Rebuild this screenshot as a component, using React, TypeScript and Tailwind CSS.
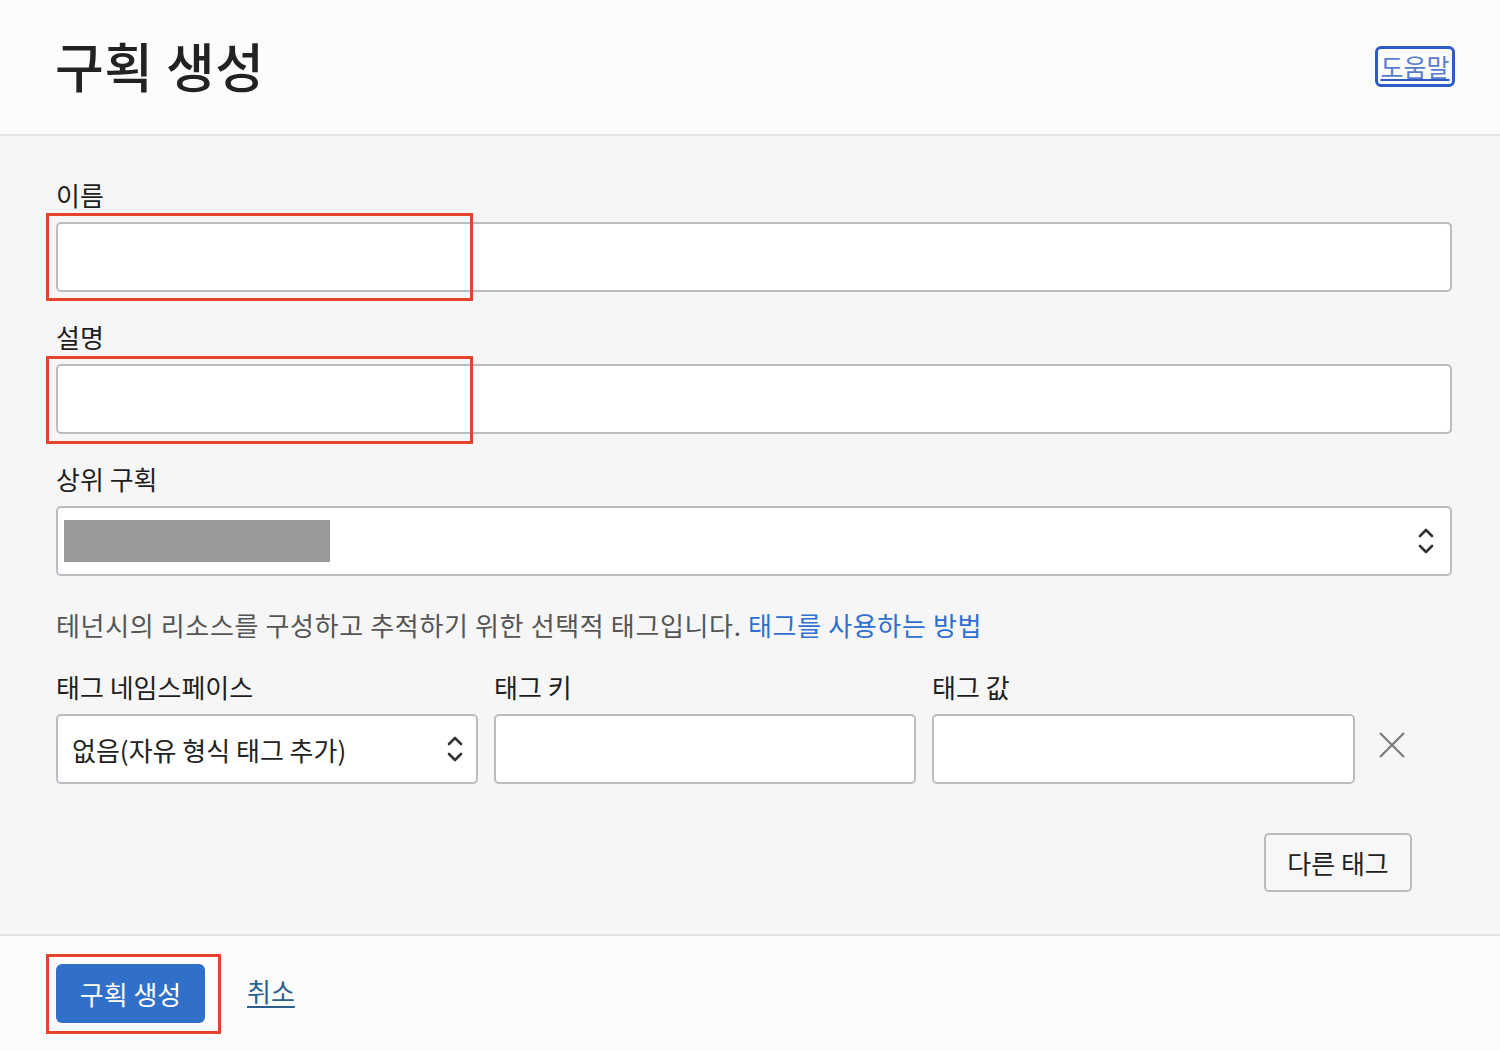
import React from "react";

const font = {
  fontFamily: '"Noto Sans CJK KR", "Noto Sans", "Liberation Sans", sans-serif',
};

function UpDown({ className = "" }: { className?: string }) {
  return (
    <svg width="18" height="30" viewBox="0 0 18 30" className={className} fill="none">
      <path d="M3 10 L9 4 L15 10" stroke="#333" strokeWidth="2.6" strokeLinecap="round" strokeLinejoin="round" />
      <path d="M3 20 L9 26 L15 20" stroke="#333" strokeWidth="2.6" strokeLinecap="round" strokeLinejoin="round" />
    </svg>
  );
}

function Field({ label, children }: { label: string; children: React.ReactNode }) {
  return (
    <div className="flex flex-col">
      <div className="text-[26px] leading-[30px] text-[#1e1e1e] mb-[12px]">{label}</div>
      {children}
    </div>
  );
}

function Marked({ children, box }: { children: React.ReactNode; box: string }) {
  return (
    <div className="relative">
      {children}
      <div className={`pointer-events-none absolute border-[3px] border-[#e5432b] ${box}`} />
    </div>
  );
}

export default function App() {
  return (
    <div className="w-[1500px] h-[1050px] bg-[#f6f6f6] flex flex-col" style={font}>
      {/* header */}
      <header className="h-[136px] shrink-0 bg-[#fcfcfc] border-b-2 border-[#e3e3e3] flex items-center justify-between pl-[55px] pr-[45px]">
        <h1 className="text-[53px] leading-none text-[#222] font-medium tracking-[0.5px] pb-[4px]">구획 생성</h1>
        <button className="w-[80px] h-[41px] border-[3px] border-[#2d5cc6] rounded-[6px] flex items-center justify-center text-[25px] leading-none text-[#5a7ccf] underline underline-offset-[2px] decoration-[#2d5cc6] mt-[-2px] overflow-hidden">
          도움말
        </button>
      </header>

      {/* form body */}
      <main className="flex-1 pl-[56px] pr-[48px] pt-[44px] flex flex-col">
        <Field label="이름">
          <Marked box="-left-[10px] -top-[9px] w-[427px] h-[88px]">
            <div className="h-[70px] bg-white border-2 border-[#b9bcc1] rounded-[5px]" />
          </Marked>
        </Field>
        <div className="h-[30px]" />
        <Field label="설명">
          <Marked box="-left-[10px] -top-[8px] w-[427px] h-[88px]">
            <div className="h-[70px] bg-white border-2 border-[#b9bcc1] rounded-[5px]" />
          </Marked>
        </Field>
        <div className="h-[30px]" />
        <Field label="상위 구획">
          <div className="h-[70px] bg-white border-2 border-[#b9bcc1] rounded-[5px] flex items-center justify-between pl-[6px] pr-[15px]">
            <div className="w-[266px] h-[42px] bg-[#999999]" />
            <UpDown />
          </div>
        </Field>

        <p className="mt-[34px] text-[26px] leading-[30px] text-[#555] tracking-[0.65px]">
          테넌시의 리소스를 구성하고 추적하기 위한 선택적 태그입니다.{" "}
          <span className="text-[#2f6fd0]">태그를 사용하는 방법</span>
        </p>

        <div className="mt-[32px] flex items-end">
          <div className="w-[422px]">
            <Field label="태그 네임스페이스">
              <div className="h-[70px] bg-white border-2 border-[#b9bcc1] rounded-[5px] flex items-center justify-between pl-[14px] pr-[12px]">
                <span className="text-[26px] text-[#222]">없음(자유 형식 태그 추가)</span>
                <UpDown />
              </div>
            </Field>
          </div>
          <div className="w-[422px] ml-[16px]">
            <Field label="태그 키">
              <div className="h-[70px] bg-white border-2 border-[#b9bcc1] rounded-[5px]" />
            </Field>
          </div>
          <div className="w-[423px] ml-[16px]">
            <Field label="태그 값">
              <div className="h-[70px] bg-white border-2 border-[#b9bcc1] rounded-[5px]" />
            </Field>
          </div>
          <div className="h-[70px] w-[74px] flex items-center justify-center pb-[8px]">
            <svg width="28" height="28" viewBox="0 0 28 28">
              <path d="M2 2 L26 26 M26 2 L2 26" stroke="#7a7a7a" strokeWidth="2.2" />
            </svg>
          </div>
        </div>

        <div className="mt-[49px] flex justify-end pr-[40px]">
          <button className="h-[59px] w-[148px] border-2 border-[#b9bcc1] rounded-[5px] bg-[#f7f7f7] text-[26px] text-[#222]">
            다른 태그
          </button>
        </div>
      </main>

      {/* footer */}
      <footer className="h-[116px] shrink-0 bg-[#fcfcfc] border-t-2 border-[#e3e3e3] flex items-start pl-[56px] pt-[28px]">
        <Marked box="-left-[10px] -top-[10px] w-[175px] h-[80px]">
          <button className="h-[59px] w-[149px] rounded-[6px] bg-[#3070c9] text-white text-[26px]">구획 생성</button>
        </Marked>
        <a className="ml-[42px] mt-[12px] text-[26px] leading-[30px] text-[#2b5f8c] underline underline-offset-[4px]">취소</a>
      </footer>
    </div>
  );
}
